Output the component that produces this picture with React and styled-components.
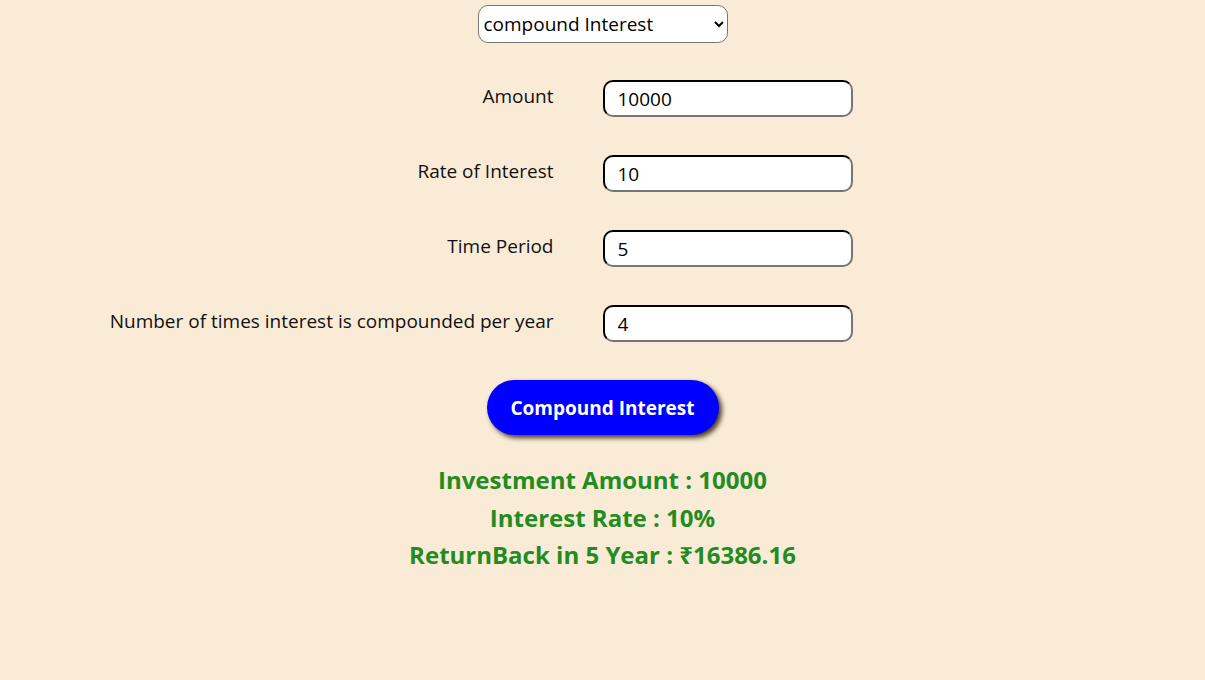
import { Fragment } from 'react'
import styled, { createGlobalStyle } from 'styled-components'

const GlobalStyle = createGlobalStyle`
  body {
    margin: 0;
    background: #faebd7;
    font-family: "Open Sans", "Noto Sans", sans-serif;
    color: #111;
  }
`

const Page = styled.div`
  display: flex;
  flex-direction: column;
  align-items: center;
  padding-top: 5px;
`

const Select = styled.select`
  width: 250px;
  height: 38px;
  font-family: inherit;
  font-size: 19px;
  padding: 0 1px;
  border: 1px solid #767676;
  border-radius: 10px;
  background: #fff;
  color: #000;
`

const Form = styled.div`
  width: 100%;
  margin-top: 37px;
  display: grid;
  grid-template-columns: 1fr 1fr;
  row-gap: 38px;
`

const Label = styled.label`
  justify-self: end;
  margin-right: 49px;
  font-size: 19px;
  line-height: 26px;
  padding-top: 3px;
`

const Input = styled.input`
  box-sizing: border-box;
  width: 250px;
  height: 37px;
  font-family: inherit;
  font-size: 19px;
  padding: 0 13px;
  border: 2px inset #767676;
  border-top-color: #111;
  border-left-color: #111;
  border-radius: 10px;
  background: #fff;
  color: #000;
`

const Button = styled.button`
  margin-top: 38px;
  width: 232px;
  height: 55px;
  border: none;
  border-radius: 28px;
  background: #0000ff;
  color: #fff;
  font-family: inherit;
  font-size: 19px;
  font-weight: 700;
  box-shadow: 3px 3px 5px #4a3a22;
  cursor: pointer;
`

const Results = styled.div`
  margin-top: 26px;
  text-align: center;
  color: #228b22;
  font-size: 24px;
  font-weight: 700;
  line-height: 37.5px;
`

const fields = [
  { label: 'Amount', value: '10000' },
  { label: 'Rate of Interest', value: '10' },
  { label: 'Time Period', value: '5' },
  { label: 'Number of times interest is compounded per year', value: '4' },
]

const App = () => {
  const [p, r, t, n] = fields.map(f => Number(f.value))
  const total = (p * Math.pow(1 + r / 100 / n, n * t)).toFixed(2)

  return (
    <Page>
      <GlobalStyle />
      <Select defaultValue="compound">
        <option value="simple">simple Interest</option>
        <option value="compound">compound Interest</option>
      </Select>
      <Form>
        {fields.map(f => (
          <Fragment key={f.label}>
            <Label>{f.label}</Label>
            <Input defaultValue={f.value} />
          </Fragment>
        ))}
      </Form>
      <Button>Compound Interest</Button>
      <Results>
        <div>Investment Amount : {p}</div>
        <div>Interest Rate : {r}%</div>
        <div>ReturnBack in {t} Year : ₹{total}</div>
      </Results>
    </Page>
  )
}

export default App
